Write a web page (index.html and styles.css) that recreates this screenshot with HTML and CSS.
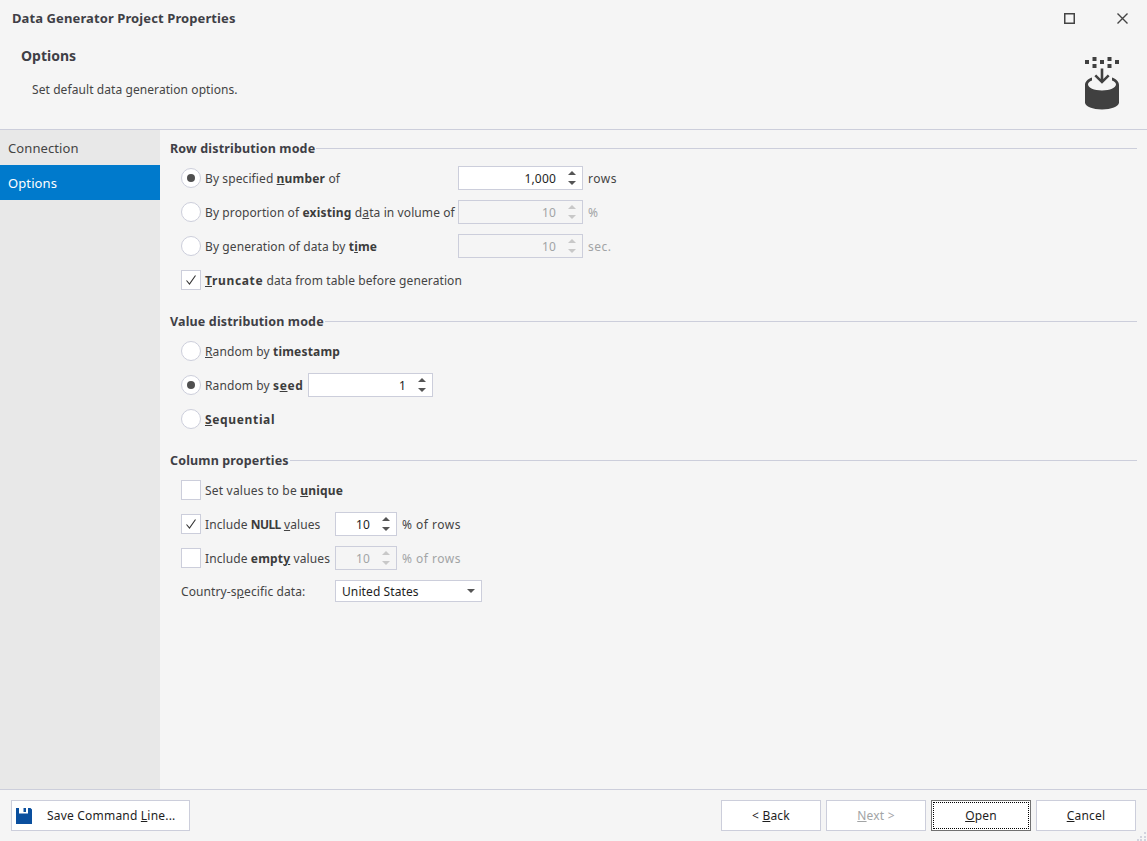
FILE: index.html
```html
<!DOCTYPE html>
<html lang="en">
<head>
<meta charset="utf-8">
<title>Data Generator Project Properties</title>
<link rel="stylesheet" href="styles.css">
</head>
<body>
<div class="window">
  <header class="titlebar">
    <span class="title">Data Generator Project Properties</span>
    <span class="win-controls">
      <svg class="win-icon" width="11" height="11" viewBox="0 0 11 11"><rect x="0.75" y="0.75" width="9.5" height="9.5" fill="none" stroke="#444" stroke-width="1.5"/></svg>
      <svg class="win-icon" width="11" height="11" viewBox="0 0 11 11"><path d="M0.5 0.5L10.5 10.5M10.5 0.5L0.5 10.5" stroke="#444" stroke-width="1.4"/></svg>
    </span>
  </header>
  <section class="banner">
    <div class="banner-text">
      <h1 class="banner-title">Options</h1>
      <p class="banner-sub">Set default data generation options.</p>
    </div>
    <svg class="banner-icon" width="34" height="54" viewBox="0 0 34 54">
      <g fill="#404040">
        <rect x="0" y="4" width="4" height="4"/><rect x="7.5" y="1" width="4" height="4"/><rect x="7.5" y="8" width="4" height="4"/><rect x="15" y="4" width="4" height="4"/><rect x="22.5" y="1" width="4" height="4"/><rect x="22.5" y="8" width="4" height="4"/><rect x="30" y="4" width="4" height="4"/>
        <path d="M7 21.500C3 23 0 25.500 0 29V46.500C0 50.500 8 53.500 17 53.500S34 50.500 34 46.500V29C34 25.500 31 23 27 21.500V24.500C29.500 25.500 31 26.800 31 28.500C31 31.500 25 34.500 17 34.500S3 31.500 3 28.500C3 26.800 4.500 25.500 7 24.500Z"/>
        <path d="M15.700 12.500H18.300V23L22.800 18.500L24.600 20.300L17 27.800L9.400 20.300L11.200 18.500L15.700 23Z"/>
      </g>
    </svg>
  </section>
  <div class="body">
    <nav class="sidebar">
      <div class="nav-item">Connection</div>
      <div class="nav-item nav-active">Options</div>
    </nav>
    <main class="content">
      <section class="group">
        <h2 class="group-head"><span>Row distribution mode</span></h2>
        <div class="row">
          <span class="radio radio-on"></span>
          <span class="label w-row">By specified <b><u>n</u>umber</b> of</span>
          <span class="spin w-125"><span class="spin-val">1,000</span><span class="spin-arrows"></span></span>
          <span class="unit">rows</span>
        </div>
        <div class="row">
          <span class="radio"></span>
          <span class="label w-row">By proportion of <b>existing</b> d<u>a</u>ta in volume of</span>
          <span class="spin w-125 spin-off"><span class="spin-val">10</span><span class="spin-arrows"></span></span>
          <span class="unit unit-off">%</span>
        </div>
        <div class="row">
          <span class="radio"></span>
          <span class="label w-row">By generation of data by <b>t<u>i</u>me</b></span>
          <span class="spin w-125 spin-off"><span class="spin-val">10</span><span class="spin-arrows"></span></span>
          <span class="unit unit-off">sec.</span>
        </div>
        <div class="row">
          <span class="check check-on"><svg width="12" height="12" viewBox="0 0 12 12"><path d="M1.500 6.500L4.500 10L10.500 1.500" fill="none" stroke="#333" stroke-width="1.100"/></svg></span>
          <span class="label"><b class="wide"><u>T</u>runcate</b> data from table before generation</span>
        </div>
      </section>
      <section class="group">
        <h2 class="group-head"><span>Value distribution mode</span></h2>
        <div class="row">
          <span class="radio"></span>
          <span class="label"><u>R</u>andom by <b>timestamp</b></span>
        </div>
        <div class="row">
          <span class="radio radio-on"></span>
          <span class="label w-seed">Random by <b class="wide">s<u>e</u>ed</b></span>
          <span class="spin w-125"><span class="spin-val">1</span><span class="spin-arrows"></span></span>
        </div>
        <div class="row">
          <span class="radio"></span>
          <span class="label"><b class="wide"><u>S</u>equential</b></span>
        </div>
      </section>
      <section class="group">
        <h2 class="group-head"><span>Column properties</span></h2>
        <div class="row">
          <span class="check"></span>
          <span class="label label-loose">Set values to be <b><u>u</u>nique</b></span>
        </div>
        <div class="row">
          <span class="check check-on"><svg width="12" height="12" viewBox="0 0 12 12"><path d="M1.500 6.500L4.500 10L10.500 1.500" fill="none" stroke="#333" stroke-width="1.100"/></svg></span>
          <span class="label w-col">Include <b class="tight">NULL</b> <u>v</u>alues</span>
          <span class="spin w-62"><span class="spin-val">10</span><span class="spin-arrows"></span></span>
          <span class="unit">% of rows</span>
        </div>
        <div class="row">
          <span class="check"></span>
          <span class="label w-col">Include <b>empt<u>y</u></b> values</span>
          <span class="spin w-62 spin-off"><span class="spin-val">10</span><span class="spin-arrows"></span></span>
          <span class="unit unit-off">% of rows</span>
        </div>
        <div class="row row-short">
          <span class="label w-country">Country-s<u>p</u>ecific data:</span>
          <span class="select"><span>United States</span><span class="select-arrow"></span></span>
        </div>
      </section>
    </main>
  </div>
  <footer class="footer">
    <button class="btn btn-save" type="button">
      <svg width="16" height="16" viewBox="0 0 16 16"><path fill="#0a4f9e" d="M0 0H3V5.500H12V0H14.500L16 1.500V16H0Z"/><rect fill="#0a4f9e" x="7.500" y="0" width="2.500" height="4"/></svg>
      <span>Save Command <u>L</u>ine...</span>
    </button>
    <span class="footer-nav">
      <button class="btn btn-nav" type="button">&lt; <u>B</u>ack</button>
      <button class="btn btn-nav btn-off" type="button"><u>N</u>ext &gt;</button>
      <button class="btn btn-nav btn-focus" type="button"><u>O</u>pen</button>
      <button class="btn btn-nav" type="button"><u>C</u>ancel</button>
    </span>
    <svg class="grip" width="10" height="10" viewBox="0 0 10 10"><g fill="#d2d3de"><rect x="7" y="1" width="2" height="2"/><rect x="3" y="5" width="2" height="2"/><rect x="7" y="5" width="2" height="2"/><rect x="0" y="8" width="2" height="2"/><rect x="3" y="8" width="2" height="2"/><rect x="7" y="8" width="2" height="2"/></g></svg>
  </footer>
</div>
</body>
</html>
```

FILE: styles.css
```css
* { box-sizing: border-box; }
html, body { margin: 0; height: 100%; overflow: hidden; }
body {
  background: #f5f5f5;
  color: #444;
  font-family: "Noto Sans", "DejaVu Sans", sans-serif;
  font-size: 12px;
  letter-spacing: 0.1px;
}
b { font-weight: 700; color: #3c3c3c; letter-spacing: 0.19px; }
b.wide { letter-spacing: 0.65px; }
b.tight { letter-spacing: -0.6px; }
.window { display: flex; flex-direction: column; height: 841px; }

.titlebar {
  display: flex; align-items: center; justify-content: space-between;
  height: 36px; padding: 0 19px 0 12px; flex: none;
}
.title { font-weight: 700; color: #3f3f46; font-size: 13px; letter-spacing: 0.1px; }
.win-controls { display: flex; gap: 42px; align-items: center; }

.banner {
  display: flex; justify-content: space-between; height: 94px; flex: none;
  border-bottom: 1px solid #cccedb;
  padding: 0 28px 0 21px;
}
.banner-title { margin: 10px 0 0; font-size: 14px; font-weight: 700; color: #3f3f46; line-height: 20px; letter-spacing: 0; }
.banner-sub { margin: 14px 0 0 11px; line-height: 20px; color: #444; letter-spacing: 0.08px; }
.banner-icon { margin-top: 20px; }

.body { display: flex; flex: 1; min-height: 0; }
.sidebar { width: 160px; background: #e8e8e8; flex: none; }
.nav-item { height: 35px; line-height: 35px; padding: 1px 0 0 8px; font-size: 13px; letter-spacing: 0.1px; color: #444; }
.nav-active { background: #007acc; color: #fff; }

.content { flex: 1; padding: 9px 10px 0; }
.group { margin-bottom: 20px; }
.group-head {
  display: flex; align-items: center; gap: 1px;
  margin: 0 0 9px; height: 18px;
  font-size: 12.500px; font-weight: 700; color: #3f3f46; letter-spacing: 0.15px;
}
.group-head::after { content: ""; flex: 1; height: 1px; background: #cccedb; }

.row { display: flex; align-items: center; height: 24px; margin-bottom: 10px; padding-left: 11px; }
.row:last-child { margin-bottom: 0; }
.row-short { height: 22px; }
.radio {
  width: 20px; height: 20px; border-radius: 50%;
  border: 1px solid #cccedb; background: #fff;
  margin-right: 4px; flex: none; display: flex; align-items: center; justify-content: center;
}
.radio-on::after { content: ""; width: 8px; height: 8px; border-radius: 50%; background: #505050; }
.check {
  width: 20px; height: 20px; border: 1px solid #cccedb; background: #fff;
  margin-right: 4px; flex: none; display: flex; align-items: center; justify-content: center;
}
.label { white-space: nowrap; flex: none; }
.label-loose { letter-spacing: 0.2px; }
.w-row { width: 253px; }
.w-seed { width: 103px; }
.w-col { width: 130px; }
.w-country { width: 154px; }

.spin {
  display: flex; align-items: center; justify-content: flex-end;
  height: 24px; border: 1px solid #cccedb; background: #fff; color: #1e1e1e;
  flex: none; padding-right: 4px;
}
.w-125 { width: 125px; }
.w-62 { width: 62px; }
.spin-val { margin-right: 9px; letter-spacing: 0.19px; }
.spin-arrows { display: flex; flex-direction: column; align-items: center; gap: 6px; width: 13px; }
.spin-arrows::before, .spin-arrows::after {
  content: ""; width: 0; height: 0;
  border-left: 4.500px solid transparent; border-right: 4.500px solid transparent;
}
.spin-arrows::before { border-bottom: 4px solid #555; }
.spin-arrows::after { border-top: 4px solid #555; }
.spin-off { background: #f5f5f5; color: #a2a4a5; }
.spin-off .spin-arrows::before { border-bottom-color: #c8c8c8; }
.spin-off .spin-arrows::after { border-top-color: #c8c8c8; }
.unit { margin-left: 5px; letter-spacing: 0.5px; }
.unit-off { color: #a2a4a5; }

.select {
  display: flex; align-items: center; justify-content: space-between;
  width: 147px; height: 22px; border: 1px solid #cccedb; background: #fff; color: #1e1e1e;
  padding: 0 6px; flex: none;
}
.select-arrow { width: 0; height: 0; border-left: 4px solid transparent; border-right: 4px solid transparent; border-top: 4px solid #555; }

.footer {
  position: relative;
  display: flex; justify-content: space-between; align-items: center;
  height: 52px; flex: none; padding: 0 11px;
  border-top: 1px solid #cccedb;
}
.btn {
  height: 31px; border: 1px solid #cccedb; background: #fff; color: #1e1e1e;
  font: inherit; letter-spacing: 0.2px; padding: 0; cursor: default;
}
.btn-save { display: flex; align-items: center; width: 179px; padding-left: 4px; gap: 15px; }
.footer-nav { display: flex; gap: 5px; }
.btn-nav { width: 100px; }
.btn-off { color: #a2a4a5; }
.btn-focus { border-color: #707070; outline: 1px dotted #000; outline-offset: -3px; }
.grip { position: absolute; right: 0; bottom: 0; }
```
